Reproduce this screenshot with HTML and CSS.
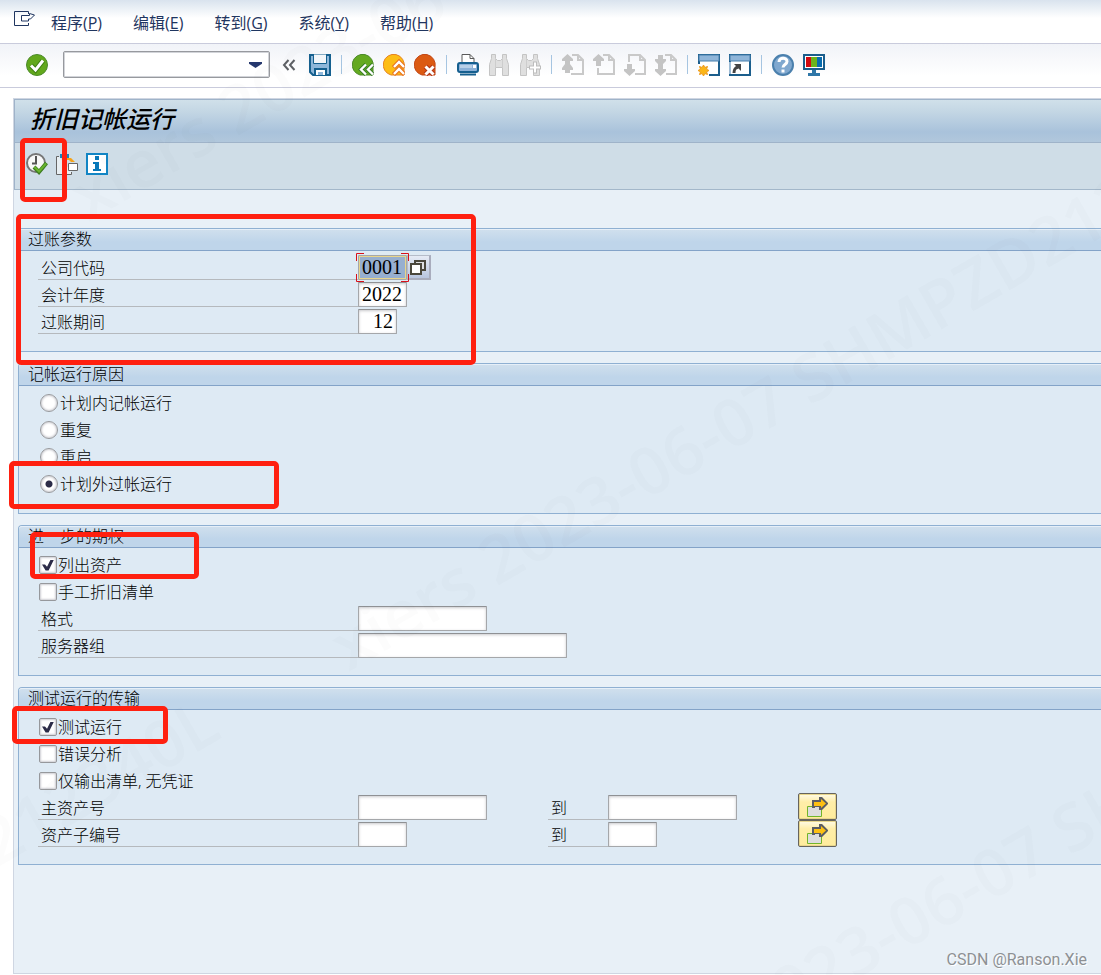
FILE: index.html
```html
<!DOCTYPE html>
<html lang="zh-CN">
<head>
    <meta charset="UTF-8">
    <meta name="viewport" content="width=device-width, initial-scale=1.0">
    <title>折旧记帐运行</title>
    <link rel="stylesheet" href="styles.css">
</head>
<body>
    <nav class="menu-bar">
        <button class="icon-button" aria-label="Menu">
            <svg width="22" height="18" viewBox="0 0 22 18" fill="none" stroke="#1f3560"><path d="M14.500 4V1.500H.5v14h14V13M7.500 5.500h8v-2l5 1.500-4 4h-2v2h-7z"/></svg>
        </button>
        <a href="#">程序(<u>P</u>)</a>
        <a href="#">编辑(<u>E</u>)</a>
        <a href="#">转到(<u>G</u>)</a>
        <a href="#">系统(<u>Y</u>)</a>
        <a href="#">帮助(<u>H</u>)</a>
    </nav>

    <header class="toolbar">
        <button class="icon-button enter" aria-label="Enter">
            <svg width="22" height="22" viewBox="0 0 22 22"><circle cx="11" cy="11" r="10.500" fill="#62a81c" stroke="#4c8a2a"/><path d="M5 11.500l4.500 4.500L17 6.500" fill="none" stroke="#3d7d12" stroke-width="5"/><path d="M5 11.500l4.500 4.500L17 6.500" fill="none" stroke="#fff" stroke-width="3"/></svg>
        </button>
        <div class="command">
            <select aria-label="Command"><option></option></select>
        </div>
        <button class="icon-button collapse" aria-label="Collapse">
            <svg width="14" height="12" viewBox="0 0 14 12" fill="none" stroke="#5d6065" stroke-width="2"><path d="M6.500 1L2 6l4.500 5M12.500 1L8 6l4.500 5"/></svg>
        </button>
        <button class="icon-button" aria-label="Save">
            <svg width="22" height="22" viewBox="0 0 22 22"><path d="M1 1h20v20H4l-3-3z" fill="#8fb8db" stroke="#15608f" stroke-width="2"/><path d="M4.500 0h13v9.500h-13z" fill="#f3f6f9" stroke="#15608f"/><path d="M6 21v-6h11v6" fill="#fff" stroke="#15608f" stroke-width="2"/><path d="M9 18h5v3H9z" fill="#8fb8db"/></svg>
        </button>
        <span class="separator"></span>
        <button class="icon-button" aria-label="Back">
            <svg width="22" height="22" viewBox="0 0 22 22"><path d="M8 21A10.500 10.500 0 1 1 21 13v8z" fill="#64aa20" stroke="#4c8a2a"/><path d="M14 10.500L9 15.500l5 5M21 10.500l-5 5 5 5" fill="none" stroke="#317725" stroke-width="4"/><path d="M14 10.500L9 15.500l5 5M21 10.500l-5 5 5 5" fill="none" stroke="#fff" stroke-width="2.400"/></svg>
        </button>
        <button class="icon-button" aria-label="Exit">
            <svg width="22" height="22" viewBox="0 0 22 22"><path d="M8 21A10.500 10.500 0 1 1 21 13v8z" fill="#fdbd15" stroke="#e68323"/><path d="M10.500 13.500l5.500-5.500 5.500 5.500M10.500 20.500l5.500-5.500 5.500 5.500" fill="none" stroke="#e8721e" stroke-width="4.500"/><path d="M11 13l5-5 5 5M11 20l5-5 5 5" fill="none" stroke="#fff" stroke-width="2.400"/></svg>
        </button>
        <button class="icon-button" aria-label="Cancel">
            <svg width="22" height="22" viewBox="0 0 22 22"><path d="M8 21A10.500 10.500 0 1 1 21 13v8z" fill="#db5a13" stroke="#c24817"/><path d="M11.500 12.500l8 8m0-8l-8 8" fill="none" stroke="#b33516" stroke-width="5"/><path d="M11.500 12.500l8 8m0-8l-8 8" fill="none" stroke="#fff" stroke-width="3"/></svg>
        </button>
        <span class="separator"></span>
        <button class="icon-button" aria-label="Print">
            <svg width="22" height="22" viewBox="0 0 22 22"><path d="M5 10V.5h8l4 4V10" fill="#fff" stroke="#5a5a5a"/><path d="M13 .5v4h4" fill="none" stroke="#5a5a5a"/><rect x="1" y="9" width="20" height="9" rx="2" fill="#8bb1d8" stroke="#155f8f" stroke-width="2"/><path d="M3 12.500h12" stroke="#b8d0e8" stroke-width="3"/><path d="M16 12.500h3" stroke="#fff" stroke-width="3"/><path d="M3 20.500h16" stroke="#155f8f" stroke-width="2"/></svg>
        </button>
        <button class="icon-button" aria-label="Find" disabled>
            <svg width="22" height="22" viewBox="0 0 22 22"><path d="M3.500.5h4v4l2 2h3l2-2v-4h4v4l2 6v11h-6v-8h-7v8h-6v-11l2-6z" fill="#dfdfdf" stroke="#c4c4c4"/><path d="M7.500 5v8M14.500 5v8" stroke="#cdcdcd"/></svg>
        </button>
        <button class="icon-button" aria-label="Find next" disabled>
            <svg width="22" height="22" viewBox="0 0 22 22"><path d="M3.500.5h4v4l2 2h3l2-2v-4h4v4l2 6v11h-6v-8h-7v8h-6v-11l2-6z" fill="#dfdfdf" stroke="#c4c4c4"/><path d="M7.500 5v8" stroke="#cdcdcd"/><path d="M14 7.500h4v4h4v4h-4v4h-4v-4h-4v-4h4z" fill="#bdbdbd"/><path d="M15 8.500h2v4h4v2h-4v4h-2v-4h-4v-2h4z" fill="#fff"/></svg>
        </button>
        <span class="separator"></span>
        <button class="icon-button" aria-label="First page" disabled>
            <svg width="22" height="22" viewBox="0 0 22 22" fill="none" stroke="#c9c9c9"><path d="M10 1h6l5 5v14H9M16 1v5h5" stroke-width="2"/><path d="M5.500 0L11 5v2H8v3l3 4v2H8v3H3v-3H0v-2l3-4V7H0V5z" fill="#c4c4c4" stroke="none"/></svg>
        </button>
        <button class="icon-button" aria-label="Previous page" disabled>
            <svg width="22" height="22" viewBox="0 0 22 22" fill="none" stroke="#c9c9c9"><path d="M10 1h6l5 5v14H5v-6M16 1v5h5" stroke-width="2"/><path d="M5.500 0L11 5v2H8v5H3V7H0V5z" fill="#c4c4c4" stroke="none"/></svg>
        </button>
        <button class="icon-button" aria-label="Next page" disabled>
            <svg width="22" height="22" viewBox="0 0 22 22" fill="none" stroke="#c9c9c9"><path d="M5 8V1h11l5 5v14H11M16 1v5h5" stroke-width="2"/><path d="M3 10h5v5h3v2l-5.500 5L0 17v-2h3z" fill="#c4c4c4" stroke="none"/></svg>
        </button>
        <button class="icon-button" aria-label="Last page" disabled>
            <svg width="22" height="22" viewBox="0 0 22 22" fill="none" stroke="#c9c9c9"><path d="M10 1h6l5 5v14H11M16 1v5h5" stroke-width="2"/><path d="M3 1h5v4h3v2l-3 3v5h3v2l-5.500 5L0 17v-2h3v-5L0 7V5h3z" fill="#c4c4c4" stroke="none"/></svg>
        </button>
        <span class="separator"></span>
        <button class="icon-button" aria-label="New session">
            <svg width="22" height="22" viewBox="0 0 22 22"><path d="M1 1h20v20H1z" fill="#fff" stroke="#1b5e8c" stroke-width="2"/><path d="M1 1h20v6H1z" fill="#8fb5d9" stroke="#467eac"/><path d="M0 10h11v12H0z" fill="#fff"/><path d="M5.500 11l1.300 2.500 2.700-1-1 2.700 2.500 1.300-2.500 1.300 1 2.700-2.700-1L5.500 22l-1.300-2.500-2.700 1 1-2.700L0 16.500l2.500-1.300-1-2.700 2.700 1z" fill="#fbb616" stroke="#ec9a1c"/></svg>
        </button>
        <button class="icon-button" aria-label="Create shortcut">
            <svg width="22" height="22" viewBox="0 0 22 22"><path d="M1 1h20v20H1z" fill="#fff" stroke="#1b5e8c" stroke-width="2"/><path d="M1 1h20v6H1z" fill="#8fb5d9" stroke="#467eac"/><path d="M0 8h2v12H0z" fill="#9dbbd4"/><path d="M5 19c0-4 1-5 4-6" fill="none" stroke="#444" stroke-width="3"/><path d="M5 10h7v7z" fill="#444"/></svg>
        </button>
        <span class="separator"></span>
        <button class="icon-button" aria-label="Help">
            <svg width="22" height="22" viewBox="0 0 22 22"><circle cx="11" cy="11" r="10" fill="#80a8cf" stroke="#4b80ad" stroke-width="2"/><path d="M7 8c0-5 8-5 8-.5 0 3-4 3-4 6" fill="none" stroke="#fff" stroke-width="3"/><path d="M9.500 15.500h3v3h-3z" fill="#fff"/></svg>
        </button>
        <button class="icon-button" aria-label="Customize layout">
            <svg width="22" height="22" viewBox="0 0 22 22"><path d="M1 1h20v14H1z" fill="#fff" stroke="#1b5e8c" stroke-width="2"/><path d="M3 3h5v10H3z" fill="#d20a11"/><path d="M8 3h6v10H8z" fill="#6db31b"/><path d="M14 3h5v10h-5z" fill="#086cae"/><path d="M9 16h4v3h4v3H5v-3h4z" fill="#2f77a8"/></svg>
        </button>
    </header>

    <main class="window">
        <h1 class="title">折旧记帐运行</h1>
        <div class="app-toolbar">
            <button class="icon-button" aria-label="Execute">
                <svg width="22" height="22" viewBox="0 0 22 22"><circle cx="10" cy="10" r="9" fill="#f8f8f8" stroke="#777" stroke-width="2"/><path d="M10 3v8m-4-.5h5" fill="none" stroke="#555" stroke-width="2"/><path d="M8 14l5 5L20.500 10" fill="none" stroke="#3d7d22" stroke-width="4"/><path d="M8.500 14l4.500 4.500 7-8" fill="none" stroke="#69b52d" stroke-width="2"/></svg>
            </button>
            <button class="icon-button" aria-label="Get variant">
                <svg width="22" height="22" viewBox="0 0 22 22"><path d="M3 3.500H.5v18h15V19" fill="#e8eef2" stroke="#666"/><path d="M4 1h9v4H4z" fill="#1685bb"/><path d="M9 5h6l4 4h-4l-2-2H9z" fill="#f5a31a"/><path d="M12.500 10.500h9v7h-9z" fill="#fff" stroke="#666"/></svg>
            </button>
            <button class="icon-button" aria-label="Information">
                <svg width="22" height="22" viewBox="0 0 22 22"><path d="M1 1h20v20H1z" fill="#fff" stroke="#1285c4" stroke-width="2"/><path d="M9 3h4v4H9zM7 9h6v7h2v2H7v-2h2v-5H7z" fill="#0878b8"/></svg>
            </button>
        </div>

        <form class="groups">
            <section class="group">
                <h2>过账参数</h2>
                <div class="rows">
                    <div class="row">
                        <label class="label" for="company">公司代码</label>
                        <div class="field focused">
                            <input class="size-4 selected" id="company" type="text" value="0001">
                            <button type="button" class="value-help" aria-label="Possible entries">
                                <svg width="16" height="16" viewBox="0 0 16 16" stroke="#4a473c" stroke-width="2"><path d="M5 2h10v9H5z" fill="#dedfe2"/><path d="M1 5h10v10H1z" fill="#fff"/></svg>
                            </button>
                            <svg class="brackets" width="53" height="29" viewBox="0 0 53 29" fill="none" stroke="#d8101a"><path d="M.5 8V.5H8M45 .5h7.500V8M.5 21v7.500H8M45 28.500h7.500V21"/></svg>
                        </div>
                    </div>
                    <div class="row">
                        <label class="label" for="year">会计年度</label>
                        <div class="field"><input class="size-4" id="year" type="text" value="2022"></div>
                    </div>
                    <div class="row">
                        <label class="label" for="period">过账期间</label>
                        <div class="field"><input class="size-3" id="period" type="text" value="12"></div>
                    </div>
                </div>
            </section>

            <section class="group">
                <h2>记帐运行原因</h2>
                <div class="rows">
                    <label class="option"><input type="radio" name="reason">计划内记帐运行</label>
                    <label class="option"><input type="radio" name="reason">重复</label>
                    <label class="option"><input type="radio" name="reason">重启</label>
                    <label class="option"><input type="radio" name="reason" checked>计划外过帐运行</label>
                </div>
            </section>

            <section class="group">
                <h2>进一步的期权</h2>
                <div class="rows">
                    <label class="option"><input type="checkbox" checked>列出资产</label>
                    <label class="option"><input type="checkbox">手工折旧清单</label>
                    <div class="row">
                        <label class="label" for="layout">格式</label>
                        <div class="field"><input class="size-12" id="layout" type="text"></div>
                    </div>
                    <div class="row">
                        <label class="label" for="server">服务器组</label>
                        <div class="field"><input class="size-20" id="server" type="text"></div>
                    </div>
                </div>
            </section>

            <section class="group">
                <h2>测试运行的传输</h2>
                <div class="rows">
                    <label class="option"><input type="checkbox" checked>测试运行</label>
                    <label class="option"><input type="checkbox">错误分析</label>
                    <label class="option"><input type="checkbox">仅输出清单, 无凭证</label>
                    <div class="row">
                        <label class="label" for="asset-from">主资产号</label>
                        <div class="field"><input class="size-12" id="asset-from" type="text"></div>
                        <label class="label to" for="asset-to">到</label>
                        <div class="field"><input class="size-12" id="asset-to" type="text"></div>
                        <button type="button" class="multiple" aria-label="Multiple selection">
                            <svg width="22" height="20" viewBox="0 0 22 20"><path d="M.5 9.500h14v10H.5z" fill="#ddd" stroke="#72b52a"/><path d="M5 3h7V0h3l6 6v1l-6 6h-3v-3H8v1H5z" fill="#5b5d63"/><path d="M7 5h7V2l5 4.500-5 4.500V9H7z" fill="#fdbf12"/></svg>
                        </button>
                    </div>
                    <div class="row">
                        <label class="label" for="sub-from">资产子编号</label>
                        <div class="field"><input class="size-4" id="sub-from" type="text"></div>
                        <label class="label to" for="sub-to">到</label>
                        <div class="field"><input class="size-4" id="sub-to" type="text"></div>
                        <button type="button" class="multiple" aria-label="Multiple selection">
                            <svg width="22" height="20" viewBox="0 0 22 20"><path d="M.5 9.500h14v10H.5z" fill="#ddd" stroke="#72b52a"/><path d="M5 3h7V0h3l6 6v1l-6 6h-3v-3H8v1H5z" fill="#5b5d63"/><path d="M7 5h7V2l5 4.500-5 4.500V9H7z" fill="#fdbf12"/></svg>
                        </button>
                    </div>
                </div>
            </section>
        </form>
    </main>

    <!-- watermark and highlight boxes lie over the screen -->
    <div class="overlay">
        <span class="watermark mark-top">xiers 2023-06-07</span>
        <span class="watermark mark-left">212340L</span>
        <span class="watermark mark-middle">xiers 2023-06-07 SHMPZD212340L</span>
        <span class="watermark mark-bottom">xiers 2023-06-07 SHMPZD212340L</span>
        <div class="highlight mark-execute"></div>
        <div class="highlight mark-params"></div>
        <div class="highlight mark-reason"></div>
        <div class="highlight mark-list"></div>
        <div class="highlight mark-test"></div>
        <span class="credit">CSDN @Ranson.Xie</span>
    </div>
</body>
</html>
```

FILE: styles.css
```css
* {
    box-sizing: border-box;
}

body {
    display: flex;
    flex-direction: column;
    position: relative;
    min-height: 100vh;
    margin: 0;
    background-color: #fff;
    color: #000;
    font-family: "Open Sans", "Noto Sans CJK SC", sans-serif;
    font-size: 16px;
    font-weight: 300;
}

button {
    padding: 0;
    border: none;
    background: none;
}

svg {
    display: block;
}

/* Menu bar */
.menu-bar {
    display: flex;
    align-items: center;
    gap: 31px;
    height: 44px;
    padding: 0 14px;
    border-bottom: 1px solid #c9cbdc;
    background: linear-gradient(#d9e3ee, #fff 18px);
}

.menu-bar .icon-button {
    margin: -6px -16px 0 0;
}

.menu-bar a {
    color: #1f3560;
    font-weight: 400;
    text-decoration: none;
}

/* Standard toolbar */
.toolbar {
    display: flex;
    align-items: center;
    gap: 9px;
    height: 44px;
    padding: 0 26px 2px;
    border-bottom: 1px solid #c9cbdc;
    background: linear-gradient(#f1f3f8, #fff 32px);
}

.enter {
    margin-right: 6px;
}

.collapse {
    margin: 0 4px 0 3px;
}

.command {
    position: relative;
    width: 207px;
}

.command select {
    display: block;
    width: 100%;
    height: 27px;
    border: 1px solid #97999e;
    border-radius: 2px;
    background-color: #fff;
    box-shadow: inset 0 0 0 1px #d2d4d9;
    appearance: none;
}

.command::after {
    content: "";
    position: absolute;
    right: 8px;
    top: 11px;
    width: 13px;
    height: 6px;
    background-color: #25376d;
    clip-path: polygon(0 0, 100% 0, 100% 30%, 50% 100%, 0 30%);
    pointer-events: none;
}

.separator {
    width: 1px;
    height: 19px;
    margin: 0 1px;
    background-color: #a6c5e1;
}

/* Screen */
.window {
    flex: 1;
    margin: 10px 0 1px 13px;
    border: 1px solid #cfd6e2;
    border-right: none;
    background-color: #e8f0f7;
}

.title {
    height: 44px;
    margin: 0;
    padding-left: 15px;
    border: 1px solid #9fb3c9;
    border-width: 1px 0 1px 1px;
    background: linear-gradient(#d0e0ea, #c3d6e4 12px, #a9c2db 32px, #b1c7dc);
    font-size: 24px;
    font-style: italic;
    font-weight: 500;
    line-height: 38px;
}

.app-toolbar {
    display: flex;
    align-items: center;
    gap: 8px;
    height: 47px;
    padding: 0 11px 4px;
    border-left: 1px solid #9fb3c9;
    border-bottom: 1px solid #a3b7ca;
    background-color: #cfdde7;
}

.groups {
    display: flex;
    flex-direction: column;
    gap: 11px;
    padding: 38px 0 20px 4px;
}

.group {
    border: 1px solid #8fb0d2;
    border-right: none;
    border-radius: 4px 0 0 0;
    background-color: #deeaf4;
}

.group h2 {
    height: 22px;
    margin: 0;
    padding-left: 9px;
    border-top: 1px solid #e6eff8;
    border-bottom: 1px solid #83a3c8;
    border-radius: 3px 0 0 0;
    background: linear-gradient(#cfdfed, #bfd5ea 12px);
    font-size: 16px;
    font-weight: 300;
    line-height: 18px;
}

.rows {
    padding: 2px 0 17px 19px;
}

.row,
.option {
    display: flex;
    height: 27px;
}

.row {
    align-items: flex-end;
}

.label {
    width: 320px;
    height: 27px;
    padding-left: 3px;
    border-bottom: 1px solid #b5b9bd;
    line-height: 30px;
}

.label.to {
    width: 60px;
}

.field {
    display: flex;
    position: relative;
    width: 190px;
}

.field input {
    height: 25px;
    padding: 0 3px;
    border: 1px solid #a5a7aa;
    border-top-color: #8f9194;
    border-radius: 1px;
    background-color: #fff;
    box-shadow: inset 0 1px 3px #c9c9cd;
    font-family: "Liberation Serif", serif;
    font-size: 20px;
}

.field .size-3 {
    width: 39px;
    text-align: right;
}

.field .size-4 {
    width: 49px;
}

.field .size-12 {
    width: 129px;
}

.field .size-20 {
    width: 209px;
}

.field .selected {
    padding: 0 2px;
    border: 2px solid #e8d58c;
    outline: 1px solid #a5a7aa;
    outline-offset: -1px;
    background-color: #97afd0;
    box-shadow: none;
}

.value-help {
    display: flex;
    align-items: center;
    justify-content: center;
    width: 24px;
    height: 25px;
    padding-right: 2px;
    border: 1px solid #b5bcc9;
    border-right: 2px solid #a9adbd;
    border-bottom: 2px solid #a9adbd;
    background: linear-gradient(#e6ebf5, #b8c5df);
}

.brackets {
    position: absolute;
    left: -2px;
    top: -2px;
}

.option {
    align-items: center;
    line-height: 30px;
    padding-top: 2px;
}

.option input {
    flex: none;
    appearance: none;
    width: 18px;
    height: 18px;
    margin: 0 1px;
    border: 1px solid #96989c;
    background-color: #fff;
    box-shadow: inset 0 0 2px 1px #cfcfd4;
}

.option input[type="radio"] {
    margin: 0 2px;
    border-radius: 50%;
}

.option input[type="radio"]:checked {
    background-image: radial-gradient(circle, #2c2c48 3px, transparent 4px);
}

.option input[type="checkbox"] {
    border-radius: 2px;
}

.option input[type="checkbox"]:checked::before {
    content: "";
    display: block;
    width: 12px;
    height: 11px;
    margin: 3px 2px;
    background-color: #2c2c48;
    clip-path: polygon(0 45%, 25% 45%, 42% 65%, 72% 0, 100% 0, 55% 100%, 30% 100%);
}

.multiple {
    display: flex;
    align-items: center;
    justify-content: center;
    width: 39px;
    height: 27px;
    border: 1px solid #66645e;
    border-radius: 2px;
    background: linear-gradient(#fffbe8, #ffeea8 8px, #ffec9c);
    box-shadow: inset 0 0 0 1px #e8d68b;
}

/* Overlay */
.overlay {
    position: absolute;
    inset: 0;
    overflow: hidden;
    pointer-events: none;
}

.watermark {
    position: absolute;
    color: rgba(90, 100, 80, 0.02);
    font-size: 66px;
    font-weight: 600;
    line-height: 66px;
    white-space: nowrap;
    transform: rotate(-30deg);
    transform-origin: 0 100%;
}

.mark-top {
    left: 92px;
    top: 162px;
}

.mark-left {
    left: 0;
    top: 808px;
}

.mark-middle {
    left: 352px;
    top: 612px;
}

.mark-bottom {
    left: 612px;
    top: 1062px;
}

.highlight {
    position: absolute;
    border: 5px solid #ff2010;
    border-radius: 5px;
}

.mark-execute {
    left: 20px;
    top: 138px;
    width: 47px;
    height: 64px;
}

.mark-params {
    left: 16px;
    top: 214px;
    width: 460px;
    height: 151px;
}

.mark-reason {
    left: 9px;
    top: 461px;
    width: 270px;
    height: 48px;
}

.mark-list {
    left: 30px;
    top: 532px;
    width: 169px;
    height: 47px;
}

.mark-test {
    left: 12px;
    top: 706px;
    width: 156px;
    height: 38px;
}

.credit {
    position: absolute;
    right: 14px;
    bottom: 6px;
    color: #8d9094;
    font-family: Roboto, sans-serif;
    font-size: 16px;
    font-weight: 400;
    text-shadow: 1px 1px 0 #fff;
}
```
